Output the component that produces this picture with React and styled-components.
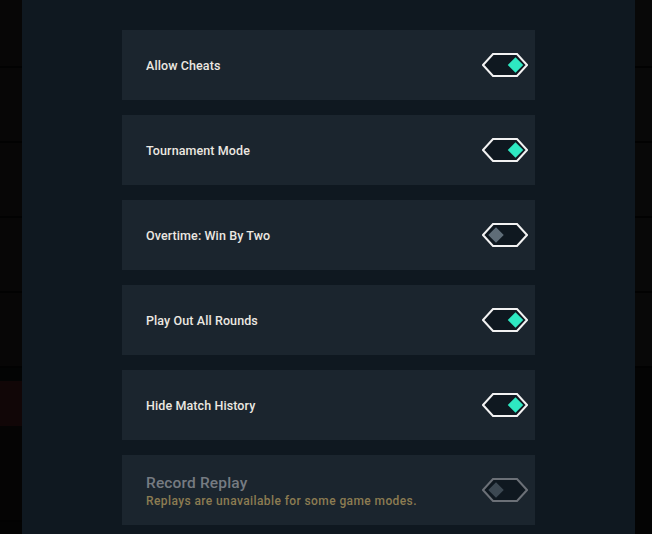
import React, { useState } from 'react'
import styled, { createGlobalStyle } from 'styled-components'

const GlobalStyle = createGlobalStyle`
  html, body {
    margin: 0;
    padding: 0;
    background: #060606;
  }
  * {
    box-sizing: border-box;
  }
`

const SETTINGS = [
  { id: 'cheats', label: 'Allow Cheats', on: true },
  { id: 'tournament', label: 'Tournament Mode', on: true },
  { id: 'overtime', label: 'Overtime: Win By Two', on: false },
  { id: 'rounds', label: 'Play Out All Rounds', on: true },
  { id: 'history', label: 'Hide Match History', on: true },
]

// rows of the list behind the overlay
const BACKDROP_ROWS = [68, 75, 75, 75, 75]

function Toggle({ on, disabled, onClick }) {
  return (
    <ToggleButton onClick={disabled ? undefined : onClick} disabled={disabled}>
      <svg width="46" height="24" viewBox="-1 -1 46 24">
        <polygon
          points="0,11 10,0 34,0 44,11 34,22 10,22"
          fill="#0f1820"
          stroke={disabled ? '#6b7077' : '#f2f2f2'}
          strokeWidth="2"
          strokeLinejoin="miter"
        />
        <rect
          x={on ? 27 : 7.5}
          y="5.5"
          width="11"
          height="11"
          fill={disabled ? '#3c4852' : on ? '#2ee8c2' : '#5f6d78'}
          transform={`rotate(45 ${on ? 32.5 : 13} 11)`}
        />
      </svg>
    </ToggleButton>
  )
}

export default function App() {
  const [values, setValues] = useState(() =>
    Object.fromEntries(SETTINGS.map(s => [s.id, s.on]))
  )

  return (
    <>
      <GlobalStyle />
      <Page>
        <Backdrop $width={22}>
          {BACKDROP_ROWS.map((h, i) => (
            <BackdropRow key={i} $height={h} $tint="#070606" />
          ))}
          <BackdropRow $height={13} $tint="#030404" $flat />
          <BackdropRow $height={45} $tint="#110607" $flat />
          <BackdropRow $height={96} $tint="#050404" />
          <BackdropRow $height={12} $tint="#030303" $flat />
        </Backdrop>

        <Panel>
          <CardList>
            {SETTINGS.map(s => (
              <Card key={s.id}>
                <Label>{s.label}</Label>
                <Toggle
                  on={values[s.id]}
                  onClick={() => setValues(v => ({ ...v, [s.id]: !v[s.id] }))}
                />
              </Card>
            ))}
            <Card>
              <TextStack>
                <DisabledTitle>Record Replay</DisabledTitle>
                <Notice>Replays are unavailable for some game modes.</Notice>
              </TextStack>
              <Toggle on={false} disabled />
            </Card>
          </CardList>
        </Panel>

        <Backdrop $width={17}>
          {BACKDROP_ROWS.map((h, i) => (
            <BackdropRow key={i} $height={h} $tint="#080808" />
          ))}
          <BackdropRow $height={166} $tint="#040404" $flat />
        </Backdrop>
      </Page>
    </>
  )
}

const Page = styled.div`
  display: flex;
  width: 652px;
  height: 534px;
  overflow: hidden;
  background: #060606;
  font-family: Roboto, "Liberation Sans", sans-serif;
`

const Backdrop = styled.div`
  flex: 0 0 ${props => props.$width}px;
  display: flex;
  flex-direction: column;
`

const BackdropRow = styled.div`
  flex: 0 0 ${props => props.$height}px;
  background: ${props => props.$tint};
  border-bottom: ${props => (props.$flat ? 'none' : '2px solid #020202')};
`

const Panel = styled.div`
  flex: 1;
  background: #0f1820;
  padding-top: 30px;
  display: flex;
  justify-content: center;
`

const CardList = styled.div`
  width: 413px;
  display: flex;
  flex-direction: column;
  gap: 15px;
`

const Card = styled.div`
  height: 70px;
  background: #1b252e;
  display: flex;
  align-items: center;
  justify-content: space-between;
  padding: 0 7px 0 24px;
`

const Label = styled.span`
  color: #ece8e1;
  font-size: 12.5px;
  font-weight: 500;
  letter-spacing: 0.1px;
`

const TextStack = styled.div`
  display: flex;
  flex-direction: column;
  gap: 2px;
  margin-top: 2px;
`

const DisabledTitle = styled.span`
  color: #767b82;
  font-size: 15.5px;
  font-weight: 500;
  letter-spacing: 0.15px;
`

const Notice = styled.span`
  color: #8c7c52;
  font-size: 12px;
  font-weight: 500;
  letter-spacing: 0.4px;
`

const ToggleButton = styled.button`
  border: none;
  background: none;
  padding: 0;
  display: flex;
  cursor: ${props => (props.disabled ? 'default' : 'pointer')};
`
